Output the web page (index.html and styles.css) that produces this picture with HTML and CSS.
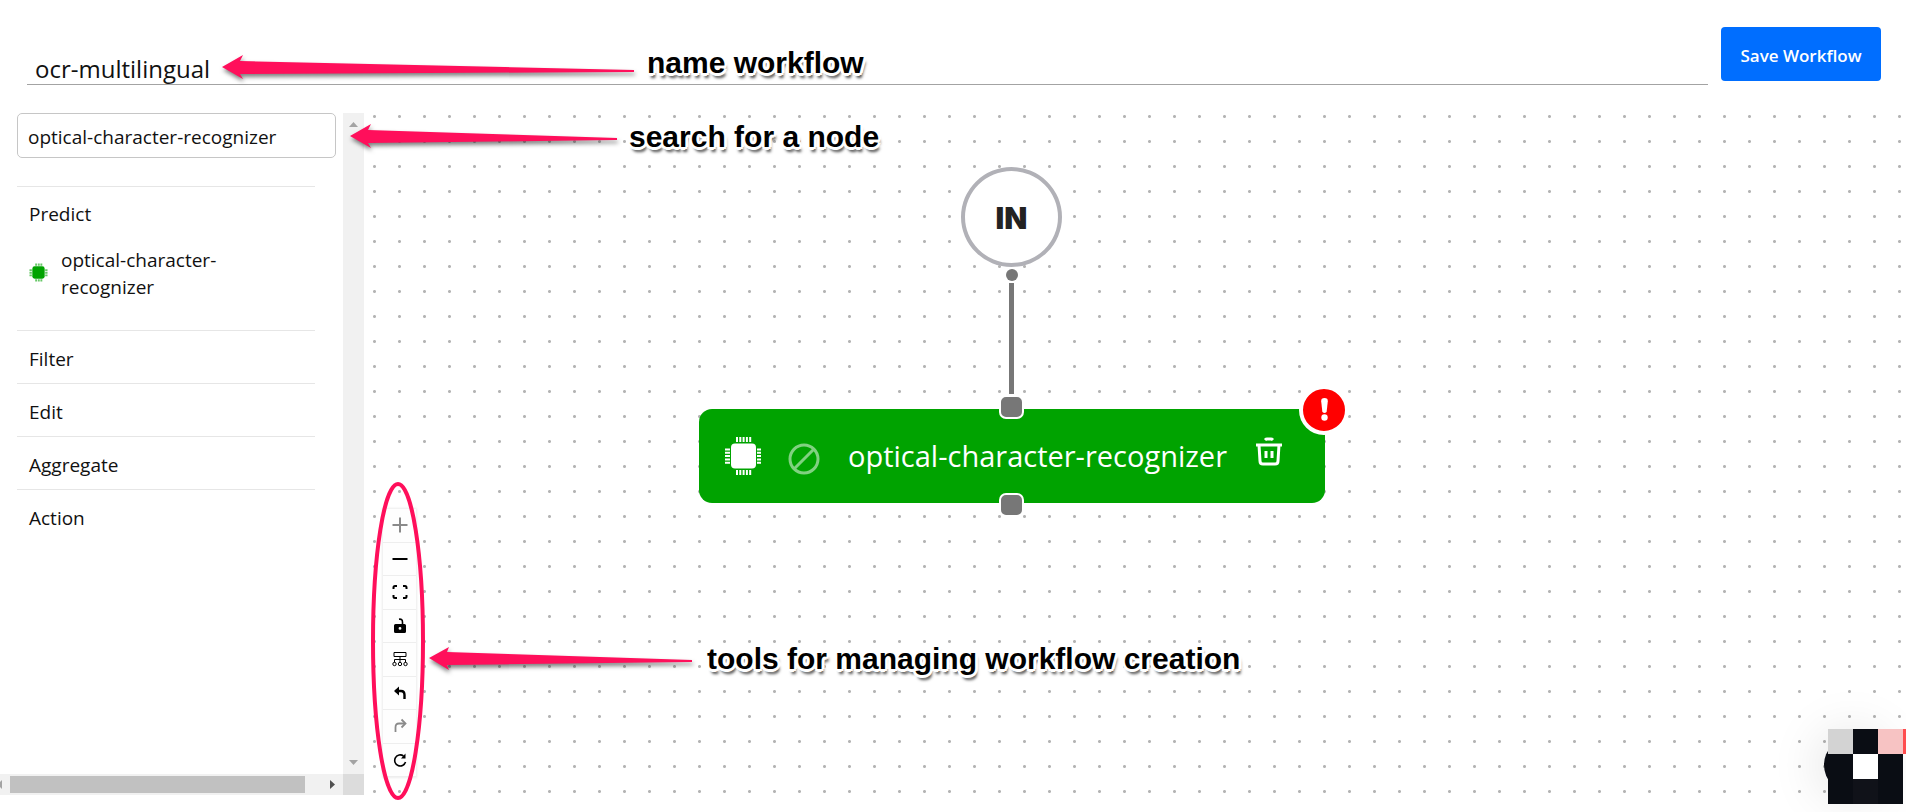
FILE: index.html
```html
<!DOCTYPE html>
<html lang="en">
<head>
<meta charset="utf-8">
<title>Workflow editor</title>
<link rel="stylesheet" href="styles.css">
</head>
<body>
<svg class="defs" width="0" height="0" aria-hidden="true">
  <symbol id="chip" viewBox="0 0 38 40">
    <rect x="7" y="7.500" width="25" height="25" rx="4"/>
    <path d="M12 1h2v5h-2zM15.300 1h2v5h-2zM18.600 1h2v5h-2zM21.900 1h2v5h-2zM25.200 1h2v5h-2zM12 34h2v5h-2zM15.300 34h2v5h-2zM18.600 34h2v5h-2zM21.900 34h2v5h-2zM25.200 34h2v5h-2zM1 12.500h5v2h-5zM1 15.800h5v2h-5zM1 19.100h5v2h-5zM1 22.400h5v2h-5zM1 25.700h5v2h-5zM33 12.500h4v2h-4zM33 15.800h4v2h-4zM33 19.100h4v2h-4zM33 22.400h4v2h-4zM33 25.700h4v2h-4z"/>
  </symbol>
</svg>
<div class="app">
  <header class="topbar">
    <input class="workflow-name" type="text" aria-label="Workflow name" value="ocr-multilingual">
    <button class="save" type="button">Save Workflow</button>
  </header>
  <main class="editor">
    <aside class="sidebar">
      <div class="palette">
        <input class="search" type="text" aria-label="Search for a node" value="optical-character-recognizer">
        <nav class="groups">
          <section class="group group-open">
            <h2 class="group-title">Predict</h2>
            <button class="palette-item" type="button">
              <svg class="palette-icon" aria-hidden="true" viewBox="0 0 20 20"><rect x="3.500" y="3.500" width="13" height="13" rx="2.500"/><path opacity=".6" d="M6.500 .5h2v2.500h-2zM9.300 .5h2v2.500h-2zM12 .5h2v2.500h-2zM6.500 17h2v2.500h-2zM9.300 17h2v2.500h-2zM12 17h2v2.500h-2zM.5 6.500h2.500v2h-2.500zM.5 9.300h2.500v2h-2.500zM.5 12h2.500v2h-2.500zM17 6.500h2.500v2h-2.500zM17 9.300h2.500v2h-2.500zM17 12h2.500v2h-2.500z"/></svg>
              <span>optical-character-recognizer</span>
            </button>
          </section>
          <section class="group"><h2 class="group-title">Filter</h2></section>
          <section class="group"><h2 class="group-title">Edit</h2></section>
          <section class="group"><h2 class="group-title">Aggregate</h2></section>
          <section class="group"><h2 class="group-title">Action</h2></section>
        </nav>
      </div>
      <div class="scroll-v" aria-hidden="true">
        <svg width="9" height="5"><path fill="#a3a3a3" d="M0 5L4.500 0L9 5z"/></svg>
        <svg width="9" height="5"><path fill="#a3a3a3" d="M0 0L4.500 5L9 0z"/></svg>
      </div>
      <div class="scroll-h" aria-hidden="true">
        <svg width="2" height="9"><path fill="#a3a3a3" d="M2 0v9L0 7V2z"/></svg>
        <span class="thumb"></span>
        <svg width="5" height="9"><path fill="#505050" d="M0 0L5 4.500L0 9z"/></svg>
      </div>
      <div class="scroll-corner"></div>
    </aside>
    <section class="canvas" aria-label="Workflow canvas">
      <span class="edge"></span>
      <div class="node-in">IN</div>
      <span class="port"></span>
      <article class="node">
        <svg class="node-chip" fill="#fff" aria-hidden="true"><use href="#chip"/></svg>
        <svg class="node-ban" viewBox="0 0 32 32" fill="none" stroke="#fff" stroke-width="3" aria-hidden="true"><circle cx="16" cy="16" r="14"/><path d="M6 26L26 6"/></svg>
        <span class="node-label">optical-character-recognizer</span>
        <button class="trash" type="button" aria-label="Delete node">
          <svg width="28" height="30" viewBox="0 0 28 30" fill="none" stroke="#fff" stroke-width="3" aria-hidden="true"><path d="M1 8h26M4 8l1 16q0 3 3 3h12q3 0 3-3L24 8"/><path d="M10 3q1-1 2-1h4q1 0 2 1"/><path d="M11 14v7M17 14v7"/></svg>
        </button>
        <span class="handle handle-top"></span>
        <span class="handle handle-bottom"></span>
        <span class="badge" role="img" aria-label="Error">
          <svg width="42" height="42" viewBox="0 0 42 42" fill="#fff"><path d="M21.500 9q3.500 0 3.300 3.300l-1.100 10q-.2 1.700-2.200 1.700t-2.200-1.700l-1.100-10Q18 9 21.500 9z"/><circle cx="21.500" cy="28.500" r="3.200"/></svg>
        </span>
      </article>
      <div class="controls">
        <button type="button" aria-label="Zoom in" disabled><svg viewBox="0 0 16 16"><path d="M8 .5v15M.5 8h15" stroke-width="2"/></svg></button>
        <button type="button" aria-label="Zoom out"><svg viewBox="0 0 16 16"><path d="M.5 8h15" stroke-width="2"/></svg></button>
        <button type="button" aria-label="Fit view"><svg viewBox="0 0 16 16"><path d="M1.500 5V3.500q0-1.500 1.500-1.500h2M11 2h2q1.500 0 1.500 1.500V5M1.500 11v1.500q0 1.500 1.500 1.500h2M11 14h2q1.500 0 1.500-1.500V11" stroke-width="2"/></svg></button>
        <button type="button" aria-label="Unlock"><svg viewBox="0 0 16 16"><path fill="#000" fill-rule="evenodd" stroke="none" d="M3.500 6h9q1.500 0 1.500 1.500v6q0 1.500-1.500 1.500h-9Q2 15 2 13.500v-6Q2 6 3.500 6zM8 9a1.400 1.400 0 1 0 0 2.800A1.400 1.400 0 0 0 8 9z"/><path d="M7 1.200q3.500-.5 3.500 3V6" stroke-width="1.600"/></svg></button>
        <button type="button" aria-label="Arrange"><svg viewBox="0 0 16 16" stroke-width="1"><path d="M2 1.500h12v4H2zM8 5.500v6M2.500 11.500v-3h11v3"/><circle cx="2.500" cy="13" r="1.700"/><circle cx="8" cy="13" r="1.700"/><circle cx="13.500" cy="13" r="1.700"/></svg></button>
        <button type="button" aria-label="Undo"><svg viewBox="0 0 16 16"><path d="M3.500 6h5.500q3.500 0 3.500 4v4" stroke-width="2.400"/><path fill="#000" stroke="none" d="M2 6l5-4.500v9z"/></svg></button>
        <button type="button" aria-label="Redo" disabled><svg viewBox="0 0 16 16"><path d="M13 5.500H7q-3.500 0-3.500 4V14" stroke-width="1.800"/><path d="M9.500 1.500l4 4l-4 4" stroke-width="1.800"/></svg></button>
        <button type="button" aria-label="Reset"><svg viewBox="0 0 16 16"><path d="M11.500 4A5.500 5.500 0 1 0 13.500 10" stroke-width="1.600"/><path fill="#000" stroke="none" d="M13.500 1.500V6.500H9z"/></svg></button>
      </div>
    </section>
  </main>
</div>

<svg class="marks" aria-hidden="true">
  <g class="arrows">
    <path d="M222 67L243 55L240 61L634 70V72L240 74L243 79z"/>
    <path d="M350 136L371 124L368 130L617 138V140L368 143L371 148z"/>
    <path d="M429 658L449 647L447 652L692 660V662L447 665L449 670z"/>
  </g>
  <ellipse cx="398" cy="641" rx="25" ry="157"/>
</svg>
<p class="note note-name">name workflow</p>
<p class="note note-search">search for a node</p>
<p class="note note-tools">tools for managing workflow creation</p>

<div class="chat" aria-hidden="true">
  <span class="bubble"></span>
  <div class="tiles"><i class="grey"></i><i></i><i class="pink"></i><i class="red"></i><i></i><i class="white"></i><i></i><i class="none"></i><i></i><i class="soft"></i><i></i></div>
</div>
</body>
</html>
```
FILE: styles.css
```css
* { box-sizing: border-box; }

body {
  margin: 0;
  background: #fff;
  color: #111;
  font-family: "Open Sans", "Noto Sans", sans-serif;
  font-size: 19px;
  overflow: hidden;
}

button, input { font: inherit; color: inherit; }
.defs { position: absolute; }

.app {
  display: flex;
  flex-direction: column;
  height: 100vh;
  padding-bottom: 17px;
}

/* Header */
.topbar {
  display: flex;
  align-items: flex-start;
  gap: 13px;
  padding: 27px 25px 0 27px;
  height: 113px;
  flex: none;
}

.workflow-name {
  flex: 1;
  min-width: 0;
  height: 58px;
  padding: 26px 8px 0;
  border: 0;
  border-bottom: 1px solid #a3a3a3;
  background: none;
  font-size: 24px;
  line-height: 30px;
  outline: 0;
}

.save {
  width: 160px;
  height: 54px;
  padding: 2px 0 0;
  border: 0;
  border-radius: 4px;
  background: #006eff;
  color: #fff;
  font-size: 17px;
  font-weight: 600;
}

/* Sidebar */
.editor { display: flex; flex: 1; min-height: 0; }

.sidebar {
  display: grid;
  grid-template-columns: 1fr 21px;
  grid-template-rows: 1fr 21px;
  width: 364px;
  flex: none;
}

.palette { padding: 0 7px 0 17px; overflow: hidden; }

.search {
  width: 100%;
  height: 45px;
  padding: 2px 10px 0;
  border: 1px solid #c6c6c6;
  border-radius: 5px;
  background: #fff;
  outline: 0;
}

.groups { margin: 28px 21px 0 0; }
.group { border-top: 1px solid #e6e6e6; height: 53px; padding: 15px 12px 0; }
.group-open { height: 144px; padding-top: 14px; }
.group-title { margin: 0; font-size: 19px; font-weight: 400; line-height: 27px; }

.palette-item {
  display: flex;
  align-items: center;
  gap: 13px;
  width: 230px;
  margin-top: 19px;
  padding: 0;
  border: 0;
  background: none;
  line-height: 27px;
  text-align: left;
}

.palette-icon { width: 19px; height: 19px; margin-bottom: 4px; flex: none; fill: #00a300; }

.scroll-v {
  display: flex;
  flex-direction: column;
  justify-content: space-between;
  align-items: center;
  padding: 9px 0;
  background: #f1f1f1;
}

.scroll-h {
  display: flex;
  align-items: center;
  padding-right: 8px;
  background: #f1f1f1;
}

.thumb { width: 295px; height: 17px; margin: 0 auto 0 8px; background: #c1c1c1; }
.scroll-corner { background: #dcdcdc; }

/* Canvas */
.canvas {
  position: relative;
  flex: 1;
  min-width: 0;
  background: radial-gradient(circle, #b4b4b4 1px, transparent 2px) -2px -9px / 25px 25px;
}

.node-in {
  position: absolute;
  left: 597px;
  top: 54px;
  display: flex;
  align-items: center;
  justify-content: center;
  width: 101px;
  height: 100px;
  padding-top: 2px;
  border: 4px solid #b1b1b7;
  border-radius: 50%;
  background: #fff;
  color: #222;
  font-family: Inter, sans-serif;
  font-size: 30px;
  font-weight: 900;
}

.port {
  position: absolute;
  left: 642px;
  top: 156px;
  width: 12px;
  height: 12px;
  border-radius: 50%;
  background: #777;
}

.edge { position: absolute; left: 645px; top: 170px; width: 5px; height: 111px; background: #777; }

.node {
  position: absolute;
  left: 335px;
  top: 296px;
  display: flex;
  align-items: center;
  width: 626px;
  height: 94px;
  padding: 0 42px 0 25px;
  border-radius: 13px;
  background: #00a300;
  color: #fff;
}

.node-chip { width: 38px; height: 40px; }
.node-ban { width: 32px; height: 32px; margin: 6px 0 0 26px; opacity: .5; }
.node-label { margin: 0 auto 0 28px; font-size: 29px; line-height: 40px; white-space: nowrap; }
.trash { display: flex; margin-bottom: 8px; padding: 0; border: 0; background: none; }

.handle {
  position: absolute;
  left: 300px;
  width: 25px;
  height: 24px;
  border: 2px solid #fff;
  border-radius: 7px;
  background: #777;
}
.handle-top { top: -14px; }
.handle-bottom { bottom: -14px; }

.badge {
  position: absolute;
  right: -24px;
  top: -24px;
  width: 50px;
  height: 50px;
  border: 4px solid #fff;
  border-radius: 50%;
  background: #f00;
}
.badge svg { display: block; }

.controls {
  position: absolute;
  left: 19px;
  bottom: 18px;
  display: flex;
  flex-direction: column;
  width: 33px;
  height: 268px;
  box-shadow: 0 0 2px 1px rgba(0, 0, 0, .08);
}

.controls button {
  display: flex;
  flex: 1;
  align-items: center;
  justify-content: center;
  padding: 0;
  border: 0;
  border-bottom: 1px solid #eee;
  background: #fefefe;
}
.controls svg { width: 16px; height: 16px; fill: none; stroke: #000; }
.controls button:disabled svg { opacity: .45; }

/* Annotations */
.marks { position: absolute; left: 0; top: 0; width: 100%; height: 100%; pointer-events: none; }
.arrows { fill: #ff0f5b; filter: drop-shadow(1px 3px 2px rgba(0, 0, 0, .5)); }
.marks ellipse { fill: none; stroke: #ff0f5b; stroke-width: 4px; }

.note {
  position: absolute;
  margin: 0;
  color: #000;
  font: bold 30px/36px "Liberation Sans", Arial, sans-serif;
  white-space: nowrap;
  text-shadow: -3px 0 #fff, 3px 0 #fff, 0 -3px #fff, 0 3px #fff, -2px -2px #fff, 2px -2px #fff, -2px 2px #fff, 2px 2px #fff, 2px 5px 3px rgba(0, 0, 0, .7);
}
.note-name { left: 647px; top: 45px; }
.note-search { left: 629px; top: 119px; }
.note-tools { left: 707px; top: 641px; }

/* Chat launcher */
.chat { position: absolute; right: 0; bottom: 8px; }

.bubble {
  position: absolute;
  left: -4px;
  top: 8px;
  width: 56px;
  height: 56px;
  border-radius: 50%;
  background: #0a0d14;
  box-shadow: 0 0 50px 8px rgba(0, 0, 0, .1);
}

.tiles {
  position: relative;
  display: grid;
  grid-template-columns: 25px 25px 25px 3px;
  grid-auto-rows: 25px;
}
.tiles i { background: #0a0d14; }
.tiles .grey { background: #d3d3d3; }
.tiles .pink { background: #f7c3c3; }
.tiles .red { background: #ff4d4f; }
.tiles .white { background: #fff; }
.tiles .none { background: none; }
.tiles .soft { background: #101219; }
```
